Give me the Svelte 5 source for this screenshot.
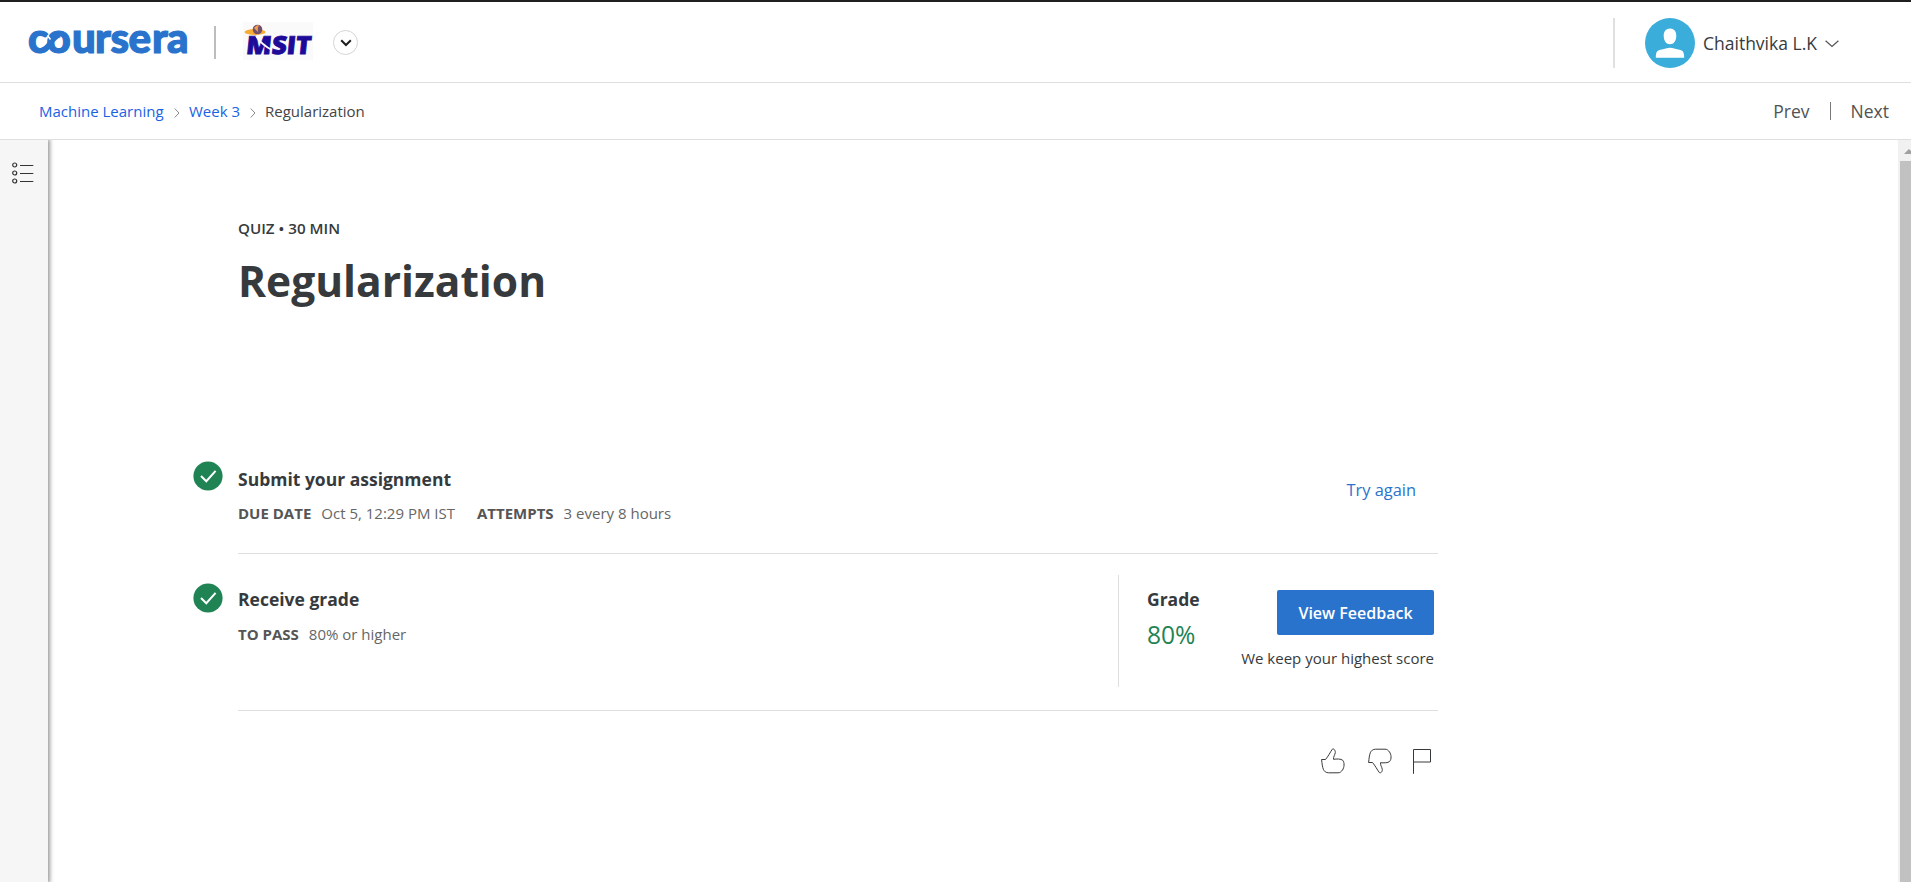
<script>
  const crumbs = ['Machine Learning', 'Week 3'];
</script>

{#snippet done()}
  <svg class="done" viewBox="0 0 30 30" width="30" height="30">
    <circle cx="15" cy="15" r="14.6" fill="#1f8354" />
    <path d="M8 15l5.3 5.2L22.6 9.8" fill="none" stroke="#fff" stroke-width="2" />
  </svg>
{/snippet}

<div class="page">
  <header>
    <svg class="brand" width="170" height="64" viewBox="-4 0 170 64">
      <text class="word" y="46"><tspan x="-1">c</tspan><tspan x="17.500">o</tspan><tspan x="43">u</tspan><tspan x="66">r</tspan><tspan x="81.500">s</tspan><tspan x="99.500">e</tspan><tspan x="123">r</tspan><tspan x="138">a</tspan></text>
      <path d="M12 43.500C21 43 21.500 30 31 27.700" fill="none" stroke="#2a73cc" stroke-width="5.500" />
      <path d="M18.500 28.500L21.500 32.500" stroke="#fff" stroke-width="1.500" />
    </svg>
    <span class="bar"></span>
    <svg class="school" width="70" height="40" viewBox="0 0 70 40">
      <rect width="70" height="38" fill="#fafafa" />
      <ellipse cx="12" cy="10" rx="10.500" ry="3" fill="#f7ab32" />
      <circle cx="14.500" cy="7.500" r="4.800" fill="#75506b" />
      <path d="M11 6q2-3 5-3q-2 3-1 7z" fill="#f0a04a" />
      <text x="6" y="32.500" textLength="65" lengthAdjust="spacingAndGlyphs" transform="skewX(-6)">MSIT</text>
      <path d="M13 14q6 9 16 14" fill="none" stroke="#fff" stroke-width="1.800" />
    </svg>
    <span class="drop">
      <svg width="12" height="8" viewBox="0 0 12 8"><path d="M1.200 1.200L6 6l4.800-4.800" fill="none" stroke="#1f1f1f" stroke-width="2" /></svg>
    </span>
    <div class="user">
      <svg width="50" height="50" viewBox="0 0 50 50">
        <circle cx="25" cy="25" r="25" fill="#3badda" />
        <path d="M25 10.500c4 0 6.300 3 6.300 7.300c0 5-2.600 8.500-6.300 8.500s-6.300-3.500-6.300-8.500c0-4.300 2.300-7.300 6.300-7.300zM10.800 39.800c0-6.300 1.500-7.500 6-8.300c3-.6 5-1.700 8.200-1.700s5.200 1.100 8.200 1.700c4.500.8 6 2 6 8.300z" fill="#fff" />
      </svg>
      <span class="name">Chaithvika L.K</span>
      <svg class="caret" width="14" height="8" viewBox="0 0 14 8"><path d="M.6.7L7 6.500l6.400-5.800" fill="none" stroke="#555" stroke-width="1.200" /></svg>
    </div>
  </header>

  <nav>
    {#each crumbs as c}
      <a class="crumb" class:first={c === 'Machine Learning'}>{c}</a>
      <svg class="sep" width="6" height="10" viewBox="0 0 6 10"><path d="M.7.500L5 5L.7 9.500" fill="none" stroke="#888" /></svg>
    {/each}
    <span class="here">Regularization</span>
    <div class="steps"><span class="prev">Prev</span><i></i><span class="next">Next</span></div>
  </nav>

  <div class="body">
    <aside>
      <svg width="22" height="22" viewBox="0 0 22 22" fill="none" stroke="#333">
        {#each [3, 11, 19] as y}
          <circle cx="2.700" cy={y} r="2" stroke-width="1.200" />
          <path d="M8 {y + 0.5}h13.300" />
        {/each}
      </svg>
    </aside>

    <main>
      <div class="kind">QUIZ • 30 MIN</div>
      <h1>Regularization</h1>

      <section class="submit">
        {@render done()}
        <div class="info">
          <h2>Submit your assignment</h2>
          <p><b>DUE DATE</b><span class="due">Oct 5, 12:29 PM IST</span><b>ATTEMPTS</b><span>3 every 8 hours</span></p>
        </div>
        <a class="again">Try again</a>
      </section>

      <section class="grade">
        {@render done()}
        <div class="info">
          <h2>Receive grade</h2>
          <p><b>TO PASS</b><span>80% or higher</span></p>
        </div>
        <div class="result">
          <div class="score"><h2>Grade</h2><span class="pct">80%</span></div>
          <div class="act"><button>View Feedback</button><span class="keep">We keep your highest score</span></div>
        </div>
      </section>

      <div class="rate">
        <svg width="24" height="26" viewBox="0 0 24 26"><path d="M.6 11.500H4.500C7.500 8 9 4.500 11.300 1.200C12.500.2 14.400 2 14.300 4.500C14 7 12.300 8.500 12.500 11.300C15.500 10.800 20 10.800 21.600 12.200C23.800 14.500 23.300 19.500 21.500 22C20 24 19 24.800 17 24.800H7.500C2 24.500 1.500 20 .6 11.500Z" /></svg>
        <svg width="24" height="26" viewBox="0 0 24 26"><path d="M.6 14.500H4.500C7.500 18 9 21.500 11.300 24.500C12.500 25.500 14.400 24 14.300 21.500C14 19 12.300 17.500 12.500 14.700C15.500 15 20 15 21.600 13.500C23.800 11 23.300 6.500 21.500 4C20 2 19 1.200 17 1.200H7.500C2 1.500 1.500 6 .6 14.500Z" /></svg>
        <svg width="20" height="26" viewBox="0 0 20 26"><path d="M1.500 25.800V1.500H18.500V14H1.500" /></svg>
      </div>
    </main>

    <div class="scroll"><span class="up"></span><div class="thumb"></div></div>
  </div>
</div>

<style>
  :global(body) { margin: 0; background: #fff; }
  .page { box-sizing: border-box; width: 1911px; height: 882px; overflow: hidden; display: flex; flex-direction: column; border-top: 2px solid #1f1f1f; font-family: "Open Sans", sans-serif; color: #373a3c; white-space: nowrap; }
  header { height: 80px; border-bottom: 1px solid #dedede; display: flex; align-items: flex-start; flex: none; }
  .brand { margin: 5px 0 0 25px; }
  .word { font: 900 42px Lato, sans-serif; fill: #2a73cc; stroke: #2a73cc; stroke-width: 1.2px; }
  .bar { width: 2px; height: 33px; margin: 24px 0 0 19px; background: #bdbdbd; }
  .school { margin: 20px 0 0 27px; }
  .school text { font: 800 25px "Open Sans", sans-serif; fill: #1d0a98; stroke: #1d0a98; stroke-width: .8px; }
  .drop { box-sizing: border-box; width: 25px; height: 25px; margin: 28px 0 0 20px; border: 1px solid #d5d5d5; border-radius: 50%; display: flex; align-items: center; justify-content: center; }
  .user { margin: 16px 72px 0 auto; height: 50px; display: flex; align-items: center; border-left: 2px solid #e0e0e0; padding-left: 30px; }
  .name { width: 114px; font-size: 17.5px; margin-left: 8px; }
  .caret { margin: 2px 0 0 8px; }
  nav { height: 56px; border-bottom: 1px solid #dedede; display: flex; align-items: center; flex: none; font-size: 15px; padding-left: 39px; }
  .crumb { color: #1a62e5; }
  .first { width: 125px; }
  .crumb:not(.first) { width: 51px; }
  .sep { margin: 4px 9px 0 10px; }
  .here { color: #444; }
  .steps { margin-left: auto; padding-right: 22px; display: flex; align-items: center; font-size: 17.5px; color: #525252; }
  .steps i { width: 1px; height: 18px; background: #777; margin: 0 20px; }
  .body { flex: 1; display: flex; min-height: 0; }
  aside { width: 48px; flex: none; background: #f6f6f6; box-shadow: 1px 0 4px 1px rgba(0, 0, 0, .4); box-sizing: border-box; padding: 22px 0 0 12px; clip-path: inset(0 -8px 0 0); }
  main { width: 1245px; margin-left: 145px; padding-top: 78px; }
  .kind { margin-left: 45px; font-size: 15.2px; font-weight: 600; line-height: 20px; }
  h1 { margin: 13px 0 0 45px; font-size: 42.5px; font-weight: 700; line-height: 60px; }
  section { position: relative; display: flex; box-sizing: border-box; }
  section::after { content: ""; position: absolute; left: 45px; right: 0; bottom: 0; height: 1px; background: #dedede; }
  .submit { margin-top: 141px; height: 102px; }
  .done { flex: none; }
  .submit .done { margin-top: 9px; }
  .info { margin-left: 15px; flex: 1; }
  h2 { margin: 0; font-size: 17.5px; font-weight: 700; line-height: 24px; color: #373a3c; }
  p { margin: 12px 0 0; font-size: 15px; line-height: 20px; color: #555; display: flex; }
  .submit .info { padding-top: 15px; }
  p b { font-weight: 700; margin-right: 10px; }
  p span { color: #666; }
  .due { margin-right: 22px; }
  .again { margin: 26px 22px 0 0; font-size: 16.4px; line-height: 24px; color: #2a73cc; font-weight: 500; }
  .grade { height: 157px; padding-top: 21px; }
  .grade .done { margin-top: 8px; }
  .grade .info { padding-top: 12px; }
  .grade p { margin-top: 13px; }
  .result { box-sizing: border-box; width: 320px; height: 112px; border-left: 1px solid #dedede; padding: 12px 4px 0 28px; display: flex; justify-content: space-between; }
  .score { display: flex; flex-direction: column; }
  .pct { font-size: 24.6px; line-height: 34px; margin-top: 7px; color: #1f8354; }
  .act { display: flex; flex-direction: column; align-items: flex-end; padding-top: 3px; }
  button { width: 157px; height: 45px; padding: 0; border: 0; border-radius: 2px; background: #2a73cc; color: #fff; font: 600 16px "Open Sans", sans-serif; }
  .keep { margin-top: 13px; font-size: 15px; line-height: 20px; }
  .rate { margin-top: 37px; display: flex; padding-right: 6px; justify-content: flex-end; gap: 23px; }
  .rate svg:last-child { margin-left: -3px; }
  .rate path { fill: none; stroke: #373a3c; }
  .scroll { width: 13px; margin-left: auto; background: #f1f1f1; display: flex; flex-direction: column; }
  .up { margin: 9px 0 7px 6px; width: 7px; height: 5px; background: #a0a0a0; clip-path: polygon(0 100%, 70% 0, 100% 40%, 100% 100%); }
  .thumb { flex: 1; margin-left: 2px; background: #c1c1c1; }
</style>
